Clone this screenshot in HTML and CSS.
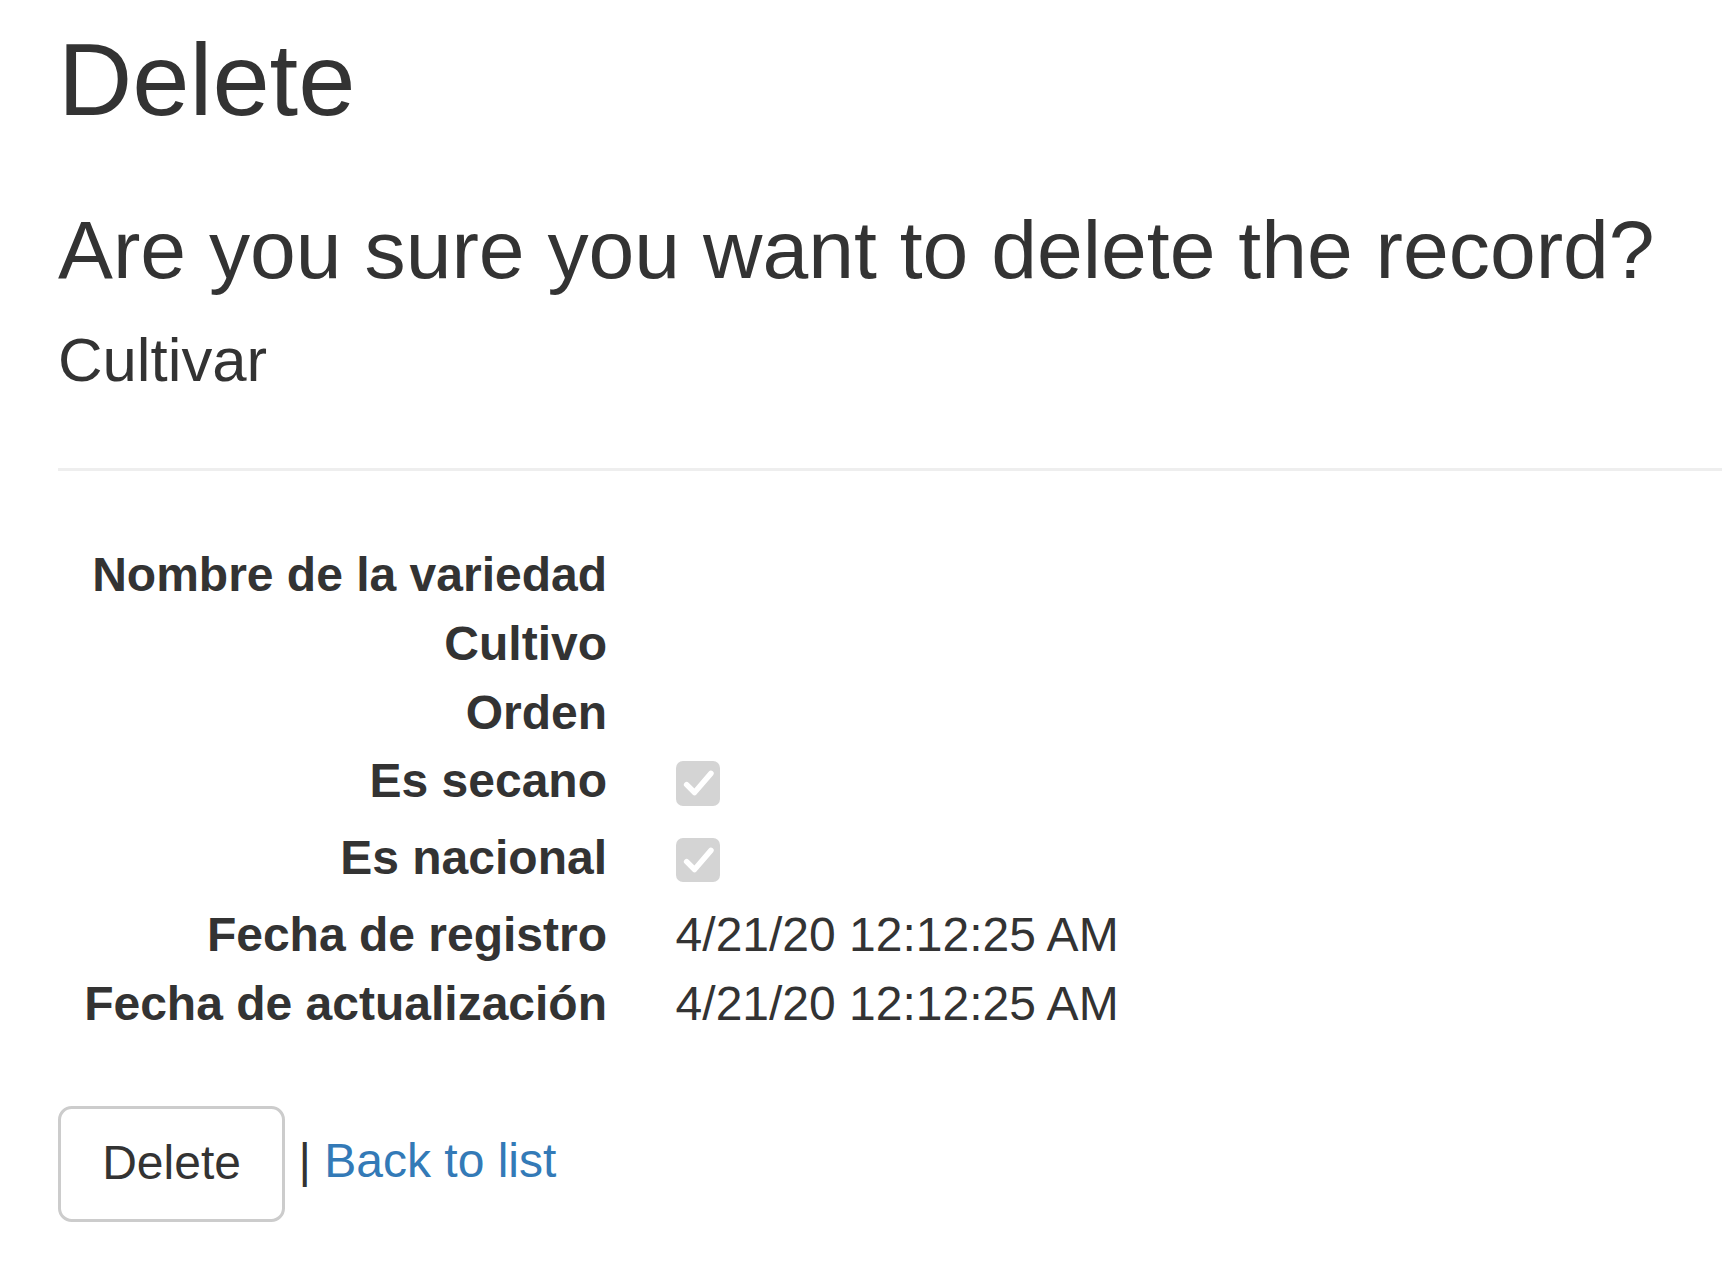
FILE: index.html
```html
<!DOCTYPE html>
<html lang="es">
<head>
<meta charset="utf-8">
<title>Delete</title>
<link rel="stylesheet" href="styles.css">
</head>
<body>
<div class="page">
  <h2 class="title">Delete</h2>
  <h3 class="question">Are you sure you want to delete the record?</h3>
  <div class="record">
    <h4 class="entity">Cultivar</h4>
    <hr class="rule">
    <dl class="details">
      <dt>Nombre de la variedad</dt>
      <dd></dd>
      <dt>Cultivo</dt>
      <dd></dd>
      <dt>Orden</dt>
      <dd></dd>
      <dt>Es secano</dt>
      <dd><span class="check"><svg viewBox="0 0 13 13" width="100%" height="100%"><path d="M3.1 6.9 L5.4 9.2 L10.2 3.6" fill="none" stroke="#fff" stroke-width="1.6" stroke-linecap="round" stroke-linejoin="round"/></svg></span></dd>
      <dt>Es nacional</dt>
      <dd><span class="check"><svg viewBox="0 0 13 13" width="100%" height="100%"><path d="M3.1 6.9 L5.4 9.2 L10.2 3.6" fill="none" stroke="#fff" stroke-width="1.6" stroke-linecap="round" stroke-linejoin="round"/></svg></span></dd>
      <dt>Fecha de registro</dt>
      <dd>4/21/20 12:12:25 AM</dd>
      <dt>Fecha de actualización</dt>
      <dd>4/21/20 12:12:25 AM</dd>
    </dl>
    <form class="actions">
      <button type="button" class="btn">Delete</button> | <a href="#" class="link">Back to list</a>
    </form>
  </div>
</div>
</body>
</html>
```
FILE: styles.css
```css
html, body {
  margin: 0;
  padding: 0;
  background: #fff;
}

body {
  font-family: "Liberation Sans", Arial, Helvetica, sans-serif;
  font-size: 48px;
  line-height: 68.6px;
  color: #333;
}

.page {
  padding: 22.7px 0 0 58px;
}

.title {
  margin: 0 0 34.3px;
  font-size: 102.9px;
  line-height: 1.1;
  font-weight: 400;
}

.question {
  margin: 68.6px 0 31px;
  font-size: 82.3px;
  line-height: 1.1;
  font-weight: 400;
}

.entity {
  margin: 31px 0 34.3px;
  font-size: 61.7px;
  line-height: 1.1;
  font-weight: 400;
}

.rule {
  margin: 74px 0 70.6px;
  border: 0;
  border-top: 3.43px solid #eee;
  height: 0;
}

.details {
  margin: 0 0 67.6px;
  display: grid;
  grid-template-columns: 549px 1fr;
  column-gap: 68.6px;
  align-items: start;
}

.details dt {
  font-weight: 700;
  text-align: right;
  white-space: nowrap;
  overflow: hidden;
  text-overflow: ellipsis;
}

.details dd {
  margin: 0;
  min-height: 68.6px;
}

.check {
  display: inline-block;
  width: 44.6px;
  height: 44.6px;
  margin-top: 13.7px;
  border-radius: 7px;
  background: #d4d4d4;
  overflow: hidden;
  vertical-align: baseline;
}

.check svg {
  display: block;
}

.actions {
  margin: 0;
}

.btn {
  display: inline-block;
  margin: 0;
  padding: 20.6px 41.2px;
  font-family: inherit;
  font-size: 48px;
  line-height: 68.6px;
  color: #333;
  background: #fff;
  border: 3.43px solid #ccc;
  border-radius: 13.7px;
  vertical-align: middle;
  cursor: pointer;
}

.link {
  color: #337ab7;
  text-decoration: none;
}
```
